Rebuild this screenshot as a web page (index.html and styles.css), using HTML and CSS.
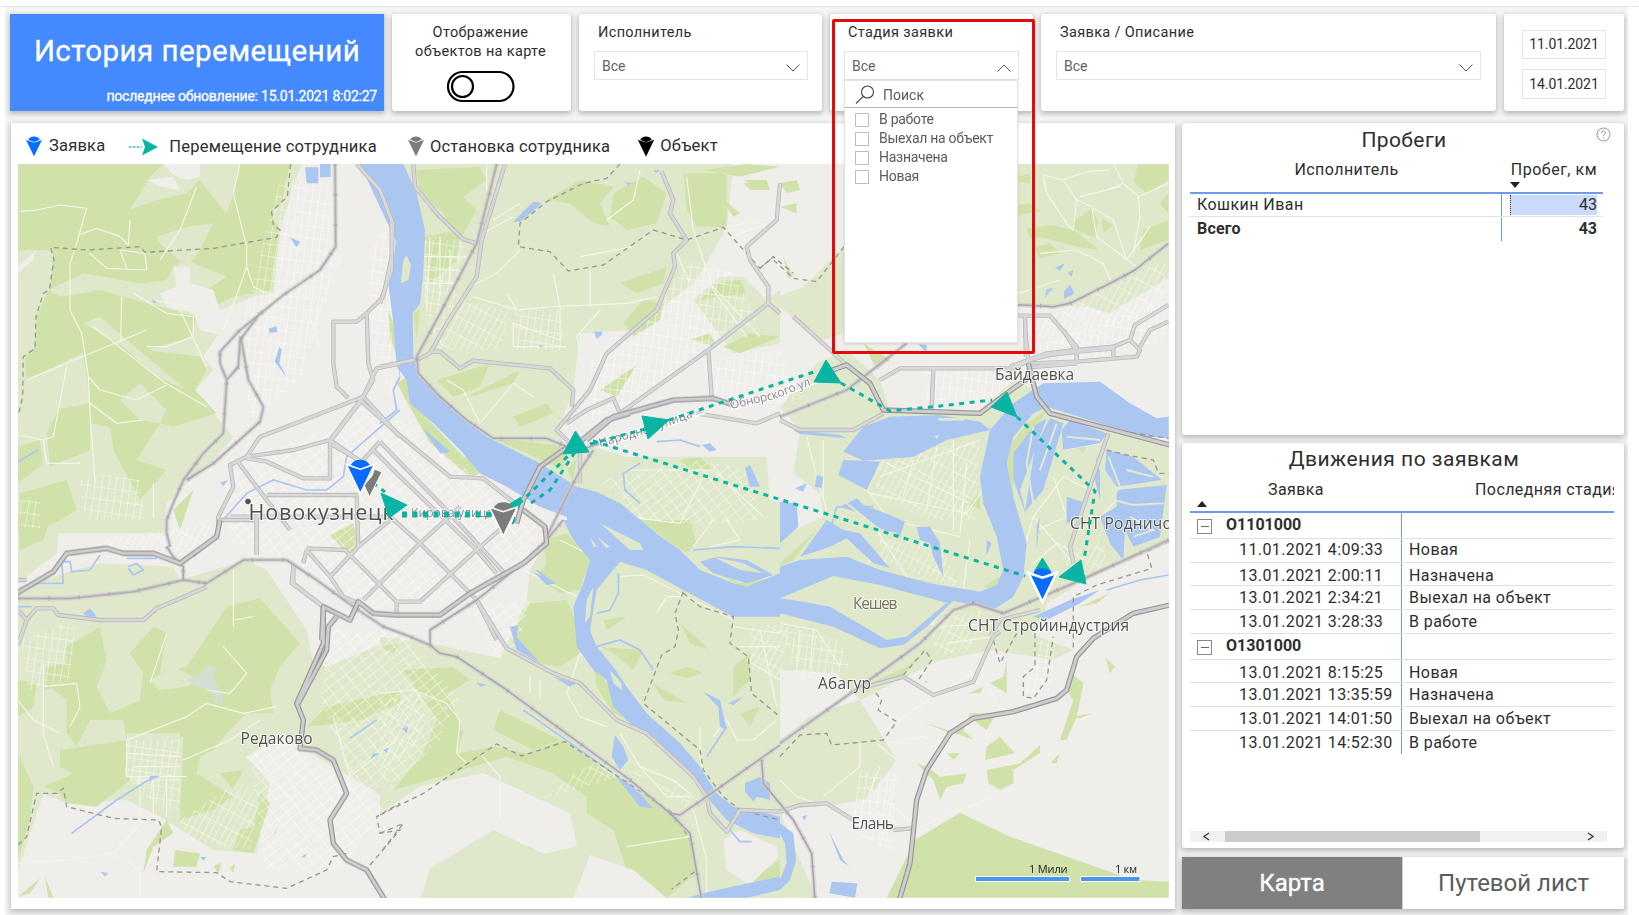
FILE: index.html
```html
<!DOCTYPE html>
<html lang="ru">
<head>
<meta charset="utf-8">
<title>История перемещений</title>
<link rel="stylesheet" href="styles.css">
</head>
<body>
<svg class="defs" width="0" height="0">
  <defs>
    <g id="pin">
      <path d="M-9.5-28.5A10.500 9 0 0 1 9.500-28.500L0-24Z" stroke="none"/>
      <path d="M-14-29 0-24.200 14-29 0 0Z"/>
    </g>
  </defs>
</svg>
<div class="topline"></div>
<div class="canvas">
  <header class="filters">
    <div class="hero">
      <h1>История перемещений</h1>
      <p>последнее обновление: 15.01.2021 8:02:27</p>
    </div>
    <div class="card toggle-card">
      <p>Отображение<br>объектов на карте</p>
      <svg class="toggle" width="70" height="34" viewBox="0 0 70 34"><rect x="2" y="2" width="65.500" height="29" rx="14.500"/><circle cx="16.500" cy="16.500" r="10.500"/></svg>
    </div>
    <div class="card slicer">
      <label>Исполнитель</label>
      <div class="select"><span>Все</span><svg width="14" height="8" viewBox="0 0 14 8"><path d="M.5.5 7 7 13.500.5"/></svg></div>
    </div>
    <div class="card slicer slicer-stage">
      <label>Стадия заявки</label>
      <div class="select"><span>Все</span><svg width="14" height="8" viewBox="0 0 14 8"><path d="M.5 7.500 7 1 13.500 7.500"/></svg></div>
      <div class="dropdown">
        <div class="search"><svg width="20" height="20" viewBox="0 0 20 20"><circle cx="12.500" cy="7" r="6"/><path d="M8.300 11.300 1 18.500"/></svg><span>Поиск</span></div>
        <ul>
          <li><i></i>В работе</li>
          <li><i></i>Выехал на объект</li>
          <li><i></i>Назначена</li>
          <li><i></i>Новая</li>
        </ul>
      </div>
      <div class="callout"></div>
    </div>
    <div class="card slicer slicer-order">
      <label>Заявка / Описание</label>
      <div class="select"><span>Все</span><svg width="14" height="8" viewBox="0 0 14 8"><path d="M.5.5 7 7 13.500.5"/></svg></div>
    </div>
    <div class="card dates"><span>11.01.2021</span><span>14.01.2021</span></div>
  </header>

  <main class="content">
    <section class="panel map-card">
      <div class="legend">
        <span class="lg lg-order"><svg width="18" height="23" viewBox="-14.500 -38 29 38"><use href="#pin" fill="#0a6cff" stroke="#fff" stroke-width="1"/></svg>Заявка</span>
        <span class="lg lg-move"><svg width="30" height="18" viewBox="0 0 30 18"><path d="M1 9H14" stroke="#63d2c8" stroke-width="2" stroke-dasharray="2.500 1.500"/><path d="M14 .5 30 9 14 17.500 17 9Z" fill="#09b4a3"/></svg>Перемещение сотрудника</span>
        <span class="lg lg-stop"><svg width="18" height="23" viewBox="-14.500 -38 29 38"><use href="#pin" fill="#7b7b7b" stroke="#fff" stroke-width="1"/></svg>Остановка сотрудника</span>
        <span class="lg lg-object"><svg width="18" height="23" viewBox="-14.500 -38 29 38"><use href="#pin" fill="#000" stroke="#fff" stroke-width=".5"/></svg>Объект</span>
      </div>
      <svg class="map" width="1151" height="734" viewBox="18 164 1151 734">
        <defs>
          <pattern id="blocks" width="11" height="8" patternUnits="userSpaceOnUse" patternTransform="rotate(-38)"><path d="M0 .5H11M.5 0V8"/></pattern>
          <pattern id="blocks2" width="7" height="12" patternUnits="userSpaceOnUse" patternTransform="rotate(8)"><path d="M0 .5H7M.5 0V12"/></pattern>
          <pattern id="blocks3" width="6" height="16" patternUnits="userSpaceOnUse" patternTransform="rotate(28)"><path d="M0 .5H6M.5 0V16"/></pattern>

          <g id="roads">
            <g transform="translate(0 150) scale(.33333)">
              <path d="M1070 42 1140 120 1175 210V320L1150 440 1100 490 1070 515H1000V640L1010 710 1045 745M1100 490 1105 640 1120 690 1090 740 860 830 780 860 740 920 690 945 700 1010 655 1100V1140M1200 640 1130 655 1090 740 990 870 880 900 740 920M990 870V985H910L800 935 740 925M1090 740 1200 860M710 930 800 1050 870 1140M800 1035H1075M990 880 1075 930"/>
            </g>
            <g transform="translate(230 400) scale(.33333)">
              <path d="M390 0 490 90 660 230 760 235 880 330M450 125 640 320 820 515M430 150 520 240 740 450 800 520M380 290 385 440 300 530M480 350 570 430 660 520 740 600 800 720M385 440 480 360M400 600 570 430 690 320M230 445 345 450 500 605H570L740 450 820 380M500 605V640M230 450 300 530 340 590 385 610M80 350V465M220 490 230 450M300 125 395 0M300 120 400 190M0 350H480M390 190 450 125M190 500 185 550 280 620"/>
            </g>
            <g transform="translate(380 150) scale(.33333)">
              <path d="M100 42 105 110 170 190 250 268 290 280M0 120 38 220 35 360 0 460M375 42 305 270 290 380 200 520 150 610 110 630M0 650 110 628M150 605H180L240 655 280 632 510 655 580 720 575 770M845 65 880 150 870 190 920 270 880 310 885 350 830 480 680 610 630 720 530 840 580 890M1200 100 1190 210 1100 290 1110 330 1165 410V460L1200 490M1165 460 985 600 720 790M985 600 995 740M560 820 620 780 700 745 720 790M600 900V1000"/>
              <path d="M1200 790 1130 820 950 790"/>
            </g>
            <g transform="translate(780 330) scale(.33333)">
              <path d="M40 -40 200 105M0 270 60 300H220L310 250M300 150 360 115H700L750 90 810 75 890 65 1005 55M460 110 455 240M735 0 745 90M745 112 890 100M850 0 890 65V100M985 310 930 470 870 650 880 700M630 920 660 870 780 840"/>
            </g>
            <g transform="translate(0 520) scale(.33333)">
              <path d="M54 270 80 300 54 375M80 300 110 265H160L175 285 300 300H430L470 265 530 240 620 200M54 180H80M650 0H770V100M880 130V190L970 260"/>
            </g>
            <g transform="translate(380 520) scale(.33333)">
              <path d="M290 240 380 385 520 460 600 490 710 600 800 640 940 770 980 830 990 880 1040 935 1080 870 1200 875"/>
            </g>
            <g transform="translate(780 600) scale(.33333)">
              <path d="M260 260 370 230 460 285 580 245 640 110 660 95M0 635 60 615 140 610 220 660M340 690 395 685"/>
            </g>
            <g transform="translate(1010 150) scale(.33333)">
              <path d="M-120 497H120L200 590V635M310 590V620M0 650 110 610 200 600 310 590 360 570 390 600 380 620 200 635 60 640M360 570 375 525 475 465M390 590 420 540 475 515M45 500 48 620"/>
            </g>
          </g>
          <g id="highways">
            <g transform="translate(230 400) scale(.33333)"><path d="M880 330 945 380 950 430 880 490 720 580 630 645H500L430 640 385 605 360 660 280 620 275 720M860 370 880 300 930 200 1000 150 1050 125 1130 60 1200 40"/></g>
            <g transform="translate(380 150) scale(.33333)"><path d="M620 870 700 800 880 750 1000 745 1060 765"/></g>
            <g transform="translate(780 330) scale(.33333)"><path d="M130 130 200 105 270 160 310 240 600 250 680 190 750 140M745 100 770 200 810 250 1000 300 1170 345"/></g>
            <g transform="translate(0 520) scale(.33333)"><path d="M50 220 160 155 200 100 320 85 370 100H460L540 130 650 50 660 0M970 260V370L890 550 910 600 900 685 950 690 1000 720 1040 820 990 900 1000 970 1040 1020 1100 1050 1155 1140M1010 290 985 320 980 390 895 550"/></g>
            <g transform="translate(780 600) scale(.33333)"><path d="M1170 15 1060 40 940 115 890 170 860 270 830 295 700 335 580 355 510 400 440 510 410 600 390 790 358 900"/></g>
          </g>
          <g id="rails">
            <g transform="translate(0 150) scale(.33333)"><path d="M1005 42 1007 290 960 360 850 435 720 540 660 605V640L680 690 670 850 610 910 550 990 515 1070 500 1110V1150L510 1190M780 490 720 570 715 650 680 690M722 560 745 690 790 770 780 815 640 940 560 990"/></g>
            <g transform="translate(380 150) scale(.33333)"><path d="M350 42 290 280 180 490 110 620 115 670 180 740 260 810 340 865H500L560 890M600 900 660 880M500 1160 600 960 640 900"/></g>
            <g transform="translate(780 330) scale(.33333)"><path d="M0 260 200 180 380 40M1166 630 880 760 670 850 580 820 520 840 420 940 310 1020 0 1240"/></g>
            <g transform="translate(0 520) scale(.33333)"><path d="M54 235H210L400 215 550 180 620 190 730 120 860 120 950 180 1060 260 1150 320 1230 350 1290 375M500 80 520 110 550 140V180L620 190"/></g>
            <g transform="translate(380 520) scale(.33333)"><path d="M150 375 180 400 230 410 380 510 750 780 870 880 930 940 965 1140M870 880 900 885 980 830 1200 675M150 375V330L290 240 440 120 500 60 550 0M1145 720 1150 790 1240 900 1295 1000 1305 1140"/></g>
            <g transform="translate(1010 150) scale(.33333)"><path d="M0 463 130 470 180 460 300 400 375 360 475 280"/></g>
          </g>
        </defs>
        <rect class="land" x="18" y="164" width="1151" height="734"/>

        <g class="park">
          <g transform="translate(0 150) scale(.33333)"><path d="M54 42H905L880 110 840 240 820 430 770 470 650 560 610 620 640 660 585 720 650 800 700 860 640 930 560 1000 500 1060 490 1150H54Z"/></g>
          <g transform="translate(0 520) scale(.33333)"><path d="M54 0H180L170 100 54 190ZM54 200 300 130 520 140 540 180 740 120 800 150 920 330 940 430 980 440 1200 350V830L1160 835 1050 770 900 680 850 640 740 710 810 790 770 1000 640 990 480 890 380 840 200 850 130 820 54 1050Z"/></g>
          <g transform="translate(380 150) scale(.33333)"><path d="M60 42H1060L1040 230 980 340 940 400 760 540 600 550 580 720 530 850 570 900 640 890 740 920H1160L1170 1050 1200 1060V1150H760L400 950 80 680 90 480ZM940 450 1020 380 1090 380 1160 450 1200 420V580L1060 610Z"/></g>
          <g transform="translate(570 0) scale(.33333)"><path d="M600 900 700 860 822 740V1000L760 1020ZM1340 490H1800V830L1620 940 1550 920 1340 910Z"/></g>
          <g transform="translate(780 330) scale(.33333)"><path d="M0 230 110 100 200 60 300 150 330 240H600L700 150 1000 290 1166 350V640L900 760 800 820 780 900 640 960H0V620L130 560 120 490 40 430 60 300Z"/></g>
          <g transform="translate(380 520) scale(.33333)"><path d="M500 60 560 0H1200V1140H560L630 1000 760 1050 860 1133 900 1140 500 1140H120L150 1045 340 930 490 1000 590 980 570 880 310 760 120 800 0 880V350L150 370 360 415 400 330 440 240 450 150Z"/></g>
          <g transform="translate(780 600) scale(.33333)"><path d="M0 0H790L720 90 880 150 820 180 640 150 480 180 400 220 240 300 350 480 260 600 110 620 0 650ZM0 640 120 893H0Z"/></g>
        </g>

        <g class="wood">
          <g transform="translate(0 150) scale(.33333)">
            <path d="M54 42H490L450 80 390 180 470 150 560 130 600 90 680 190 720 42H870L850 150 815 190 840 240 815 420 700 440 640 470 620 420 680 380 560 330 520 350 500 390 420 400 250 370 145 420 180 440 300 420 480 470 590 500 570 560 440 600 600 620 620 660 585 720 650 790 520 830 480 820 500 780 420 700 360 750 420 810 480 820 410 930 500 960 420 1050 340 900 330 830 270 820V900L150 950 140 850 180 770 260 760 250 610 80 690 75 620 105 590 110 500 145 420 160 300 54 340Z"/>
            <path d="M54 890 120 870 130 940 54 1000ZM60 1030 200 990 230 1080 180 1110 120 1140 54 1140ZM210 740 240 725 235 745ZM520 1080 580 1020 540 1140ZM1075 42H1110L1190 150 1200 250 1170 180 1120 110ZM1165 480 1195 560 1198 640 1170 560Z"/>
          </g>
          <g transform="translate(0 520) scale(.33333)">
            <path d="M54 0H150L130 60 60 90ZM200 380 300 320 320 420 290 500 330 580 420 540 430 460 390 400 460 320 500 340 480 460 560 440 680 260 780 235 900 370 840 440 810 510 820 580 740 580 680 640 640 690 600 710 590 760 700 830 640 870 540 900 550 650 380 700 390 780 290 860 200 850 180 820 130 800 220 760 180 740 180 690 380 660 370 600 270 600 230 680 200 640 200 540 150 500 130 490 200 430Z"/>
            <path d="M54 480 110 490 100 560 54 590ZM54 700 100 800 90 900 54 1020ZM140 440 190 430 190 500 130 510ZM990 45 1060 10 1080 80 1040 100ZM920 620 980 560 1200 510V550L1080 600ZM780 820 810 850 760 1000 700 990 720 930 760 920ZM660 760 730 750 700 810ZM525 990 600 1000 590 1040 520 1040ZM640 1040 665 1025 655 1060ZM690 1045 705 1030 700 1060ZM54 1130 120 1075 90 1120ZM135 1070 160 1133H145ZM820 940 835 920 825 945ZM430 1060 440 990 500 900 520 940 460 980Z"/>
          </g>
          <g transform="translate(380 150) scale(.33333)">
            <path d="M110 60 300 50 320 90 250 140 290 180 240 270 190 190 120 130ZM500 150 600 90 700 110 660 160 690 230 640 220 570 160ZM700 130 790 80 860 130 830 220 740 240 690 200ZM910 70H1040V230H950L920 180ZM1090 90 1160 90 1150 120ZM970 60 1080 80 1200 50 1100 42ZM1010 130 1080 190 1060 200ZM960 450 1010 400 1080 390 1100 430 1020 440ZM730 520 790 450 850 460 840 510 760 560ZM930 570 990 550 1010 590ZM660 720 770 645 710 740ZM170 690 330 640 300 710 220 740ZM240 750 420 660 400 700ZM400 800 500 760 520 790 420 830ZM320 860 560 890 550 960 420 900ZM50 700 80 680 100 760 250 920 330 960 270 980 150 880ZM130 260 240 240 230 330 150 400ZM100 490 120 480 110 570ZM720 400 860 350 850 400 770 430ZM1030 590 1110 550 1200 560 1080 610ZM900 930 960 920 1000 960 930 960ZM560 960 590 930 580 990Z"/>
          </g>
          <g transform="translate(570 0) scale(.33333)"><path d="M520 550 590 540 600 570 540 570ZM630 550 680 540 690 570 650 580ZM630 620 680 610 680 640ZM640 770 670 830 655 835Z"/></g>
          <g transform="translate(1010 150) scale(.33333)"><path d="M385 42H475V90L410 130 370 95ZM450 160 475 130V190ZM190 215 245 175 265 215 255 265 190 235ZM275 205 310 225 280 250ZM50 235 130 225 200 245 265 300 200 290 90 260 60 265ZM390 300 400 240 475 210V270ZM25 80 60 70 60 100 25 95ZM25 165 60 160 90 185 25 195ZM70 290 120 280 150 310 90 325Z"/></g>
          <g transform="translate(780 330) scale(.33333)"><path d="M560 520 600 490 600 540ZM610 770 660 740 640 780ZM680 360 740 280 800 240 760 320 700 400 700 520 670 440ZM890 350 920 345 910 370ZM900 830 990 790 950 820ZM250 40 330 90 290 120ZM0 700 110 600 40 690 0 710Z"/></g>
          <g transform="translate(380 520) scale(.33333)">
            <path d="M780 0H930L950 70 920 100 860 60ZM490 60 560 40 630 120 600 210 540 220 470 170 500 130ZM410 320 450 250 560 240 590 310 600 400 540 440 480 430 400 370ZM640 430 700 520 740 600 700 580 650 500ZM0 380 60 370 40 400ZM70 450 220 440 270 480 170 540 200 520 250 640 230 700 340 680 440 700 550 660 700 770 880 880 930 950 950 1060 860 1133 740 1050 700 930 620 880 620 830 520 760 380 710 180 770 40 810 130 700 170 600ZM360 570 540 660 460 690 340 630ZM670 300 740 290 680 330ZM900 310 990 390 930 370ZM660 380 790 390 760 450 700 400ZM870 460 920 440 970 460 920 475ZM820 490 920 550 850 540ZM960 130 1080 190 1200 170 1100 210ZM1060 440 1110 400 1110 480 1060 530ZM1080 580 1140 560 1110 620ZM280 880 300 860 285 885ZM360 890 380 870 380 880ZM460 910 480 890 485 910ZM1080 1100 1200 1020V1080Z"/>
          </g>
          <g transform="translate(780 600) scale(.33333)">
            <path d="M320 893 405 720 540 638 690 710 1060 840 1166 845V893ZM380 200 440 150 350 240 270 250ZM530 210 560 200 570 240 480 255 430 245ZM615 480 620 440 660 410 705 460ZM620 510 720 490 780 435 780 460 700 510 700 550 660 570 625 550ZM410 490 440 500 480 530 560 520 550 550 500 560 480 600 460 540ZM385 385 420 375ZM430 365 500 390 580 420 550 390 570 340 650 340 620 390 580 360 510 400ZM630 250 670 230 680 180 680 280ZM565 280 610 260 600 280ZM840 420 880 300 860 270 880 225 910 250 890 350 860 420ZM880 350 935 340 900 355ZM975 170 1005 200 990 220ZM810 490 840 460 830 490ZM100 300 125 310 115 315ZM500 460 540 460 520 480Z"/>
          </g>
        </g>
        <g class="park">
          <g transform="translate(0 150) scale(.33333)"><path d="M54 300H160L150 420 54 450ZM470 260 560 230 640 220 600 300 560 350 480 280ZM600 42H720L700 130 680 190 600 90ZM75 690 250 610 270 760 160 780 140 850 54 860ZM250 520 300 500 380 570 560 720 470 680 370 590Z"/></g>
          <g transform="translate(0 520) scale(.33333)"><path d="M450 480 520 440 600 480 560 500 480 510ZM380 640 540 640 550 720 380 770Z"/></g>
        </g>
        <g class="land">
          <g transform="translate(0 150) scale(.33333)"><path d="M520 350H570V400L640 420 660 480 760 440 820 430 770 480 680 560 600 540 580 490 500 470 480 430 530 410ZM490 42H600V80L560 90 520 75ZM54 350 110 300 100 330 54 370ZM440 90 520 80 540 120 480 110Z"/></g>
          <g transform="translate(380 520) scale(.33333)"><path d="M120 800 310 760 570 880 590 980 490 1000 340 930 150 1045 120 1133H0V880ZM630 1005 760 1050 860 1133H580ZM1030 960 1080 930 1190 980 1195 1010 1110 1095 1040 1050Z"/></g>
          <g transform="translate(780 600) scale(.33333)"><path d="M0 210 170 220 240 300 170 320 90 350 0 420ZM420 230 520 190 580 200 560 260 480 270ZM0 630 100 620 200 840 110 893 50 760Z"/></g>
        </g>
        <path class="tailings" d="M186 679 200 675 208 665 216 668 214 680 222 694 223 704 216 703 210 690 195 686Z"/>

        <g class="streets">
          <g>
            <path fill="url(#blocks)" d="M265 450 330 430 360 400 400 420 480 480 540 530 520 570 470 600 350 610 290 560 230 540 225 480ZM330 630 400 630 460 700 420 760 360 800 320 700ZM250 755 280 740 345 780 385 810 340 870 265 870ZM600 480 700 460 750 470 760 520 700 525 640 520ZM470 610 530 600 520 640 500 660ZM390 690 450 700 440 740 390 790Z"/>
            <path fill="url(#blocks2)" d="M425 240 465 240 460 290 440 350 425 320ZM370 250 390 220 393 400 372 350ZM515 310 562 310 562 350 515 350ZM690 260 730 270 760 320 700 350 640 400 590 420 590 360 640 330ZM925 370 1000 365 1050 340 1165 300 1165 340 1040 370 1000 400 925 400ZM780 630 840 640 850 670 800 680ZM860 770 900 775 890 850 850 830ZM20 640 75 620 70 680 30 690ZM125 740 180 740 180 810 160 810 125 775ZM1040 640 1055 640 1052 690 1025 695ZM20 500 40 500 40 528 20 528ZM80 480 100 475 140 480 145 520 85 520ZM280 180 330 180 340 260 300 380 250 420 240 330ZM700 360 780 350 800 400 720 410Z"/>
            <path fill="url(#blocks3)" d="M870 460 980 440 975 520 930 520 880 500ZM450 300 510 310 500 350 440 350ZM180 820 240 780 260 800 250 850 190 840ZM1020 330 1165 260 1165 300 1080 350ZM750 625 790 625 780 680 750 670ZM380 700 430 690 420 740 380 780ZM930 620 985 610 970 650 935 655ZM1060 560 1100 540 1110 570 1080 575ZM100 540 230 520 190 550 120 560ZM880 540 940 540 960 590 880 560ZM540 800 580 770 600 760 700 800 690 812 640 770Z"/>
          </g>
          <g class="lanes">
            <g transform="translate(0 150) scale(.33333)"><path d="M60 185 110 180 180 165 260 175 230 280 210 340V480L245 550 265 680 270 790 285 1000M235 255 290 235 360 260 385 285 390 210M720 42 700 130 740 290 740 350 760 410 800 430M740 350 705 450 670 540M270 310 320 355 440 360 435 310 360 300 380 355M365 440 362 570M440 540 80 690M280 530 490 695 620 770M460 450 570 470M590 110 540 240 480 330M200 650 160 860 130 870 54 855M130 870 140 940 240 940M265 680 300 720 410 750 500 705M270 760 350 820 430 810M400 430 500 490 580 500V560L500 590 440 590M540 480 620 650M1010 350 980 410 940 540M880 180 920 190M930 500 960 600M460 1000V1100"/></g>
            <g transform="translate(0 520) scale(.33333)"><path d="M54 540 100 600 180 640M130 430V640L160 740M130 500 230 490 240 560 210 620M380 660 560 590 620 550 730 580 830 560M380 660V770H560M380 700 540 710M400 740H540M400 780H540M670 380 740 460 690 520 620 510M700 150V320M700 300 760 290M500 340 450 490M550 720 690 660 780 600M54 1030 200 1020 340 1000M340 1000 440 890M340 1000 420 1050V1133M1000 590 1050 770 1190 660M740 710 880 840 960 970M1050 770V830M420 770V890M460 780V890M500 780V890"/></g>
            <g transform="translate(380 150) scale(.33333)"><path d="M320 42 320 120M400 200 290 260M420 160 340 210M270 410 350 370 420 300M380 430 410 480 280 440M410 480 520 470 740 460 830 440M520 370 540 470V570L400 520M630 360V470M660 480 590 560 600 600M150 260 140 480M180 260V440M210 300V400M130 320H260M130 360H240M130 400H220M400 520V590H560M200 690 250 720 300 820 400 700 460 740M920 80 940 240 960 300 1000 420 1100 560M930 400 890 310M780 60 760 150 680 210M600 320 760 290M990 400 1140 560M1170 220 1050 260M1040 230 1200 200M740 960 1000 960 1150 1100M740 1100 900 1120 980 960"/></g>
            <g transform="translate(780 330) scale(.33333)"><path d="M80 320 110 440 140 540M130 330V500M190 440 260 480 330 570 540 620M270 490 560 550 650 420M320 400 570 520M300 440 600 330M370 500 400 390M440 540 470 350M520 330V600M560 400 540 610M570 630 550 780M290 600 400 770M240 610 270 700M760 560 880 700M700 780 760 560 850 440 930 480M820 440 860 560 770 600M850 360 960 340M980 380 1020 500 960 560M760 700 830 640 870 660"/></g>
            <g transform="translate(380 520) scale(.33333)"><path d="M540 60 640 110M430 150 590 230M0 520 100 510 200 550 240 600 230 700 260 730M640 430 600 400 560 520 600 590 680 620M450 470V520M480 480V540M720 170 790 165 900 220 1060 300M830 280 860 230 900 230M300 700 360 770V900M720 640 780 740 860 830 930 830M780 740 880 780 940 830M940 80 1000 0M990 80 1080 60 1040 0M1000 650 1040 600 1070 660 1120 660 1190 600M960 620 960 720 980 780M1140 330 1190 560M1100 420 1200 480M1080 380H1200M1060 320 1200 340M940 870 980 1020V1133M740 980 930 950"/></g>
            <g transform="translate(780 600) scale(.33333)"><path d="M320 430 430 410 510 440M300 400 430 310 590 210M240 430 240 500 130 590M420 680 520 640 640 590M290 430 350 480M600 210 660 330M260 560 390 660M270 620 380 690M230 700 370 760M300 500 260 600M340 520 300 740M0 70 110 90 180 200M60 90 50 200M100 90 90 210M480 80 640 70M500 130 640 110M0 540 50 590 110 610"/></g>
            <g transform="translate(1010 150) scale(.33333)"><path d="M100 80 110 130 170 220 190 240M100 75 160 90 200 150 190 240M160 90 230 65 300 60M200 150 245 170 260 260 380 350M310 42 340 100 385 140 475 100M340 100 290 120M385 140 390 200 370 310M250 175 310 210 350 330M90 310 200 300 280 340 300 390M25 430 150 390M420 230 350 330M210 140 330 110"/></g>
          </g>
        </g>

        <g class="water">
          <g transform="translate(0 150) scale(.33333)"><path d="M915 52H955V100H920ZM960 42H992V82H960ZM870 262 900 275 890 292ZM805 535 830 530 832 545 810 550ZM838 590 824 635 860 682 838 640 845 600ZM455 447 470 455 460 460ZM660 998 685 990 670 1008ZM1080 42H1200V700L1190 560 1170 400 1200 300Z" /></g>
          <g transform="translate(380 150) scale(.33333)">
            <path d="M-50 42H70L110 130 135 240 130 370 120 460 98 490 100 620 120 680 180 740 250 800 320 860 400 900 480 940 590 1010 650 1025 720 1060 830 1150H570L560 1100 480 1070 430 1040 380 1010 300 970 240 900 160 820 90 760 80 690 50 650 40 520 25 400 45 300 55 200 30 120 0 80Z"/>
            <path d="M400 215 460 155 485 158 470 175 420 215ZM735 97 755 98 745 107ZM820 60 840 60 830 70ZM642 545 667 545 665 555 650 567ZM475 585 495 588 480 592ZM1095 955 1110 945 1140 1010 1110 1010ZM965 885 990 880 1010 900 990 905ZM130 835 210 905 180 910Z"/>
          </g>
          <g transform="translate(780 330) scale(.33333)">
            <path d="M0 710 60 690 200 680 300 720 450 760 600 785 650 765 670 720 650 620 610 520 600 440 630 300 700 220 790 160 960 155 1050 220 1130 265 1166 260V325L1100 320 960 280 800 230 760 250 700 320 680 400 700 500 740 640 730 740 700 800 640 840 520 812 440 890 370 945 300 955 160 890 0 850Z"/>
            <path d="M190 365 250 290 330 260 480 255 600 275 630 300 500 330 400 380 250 392ZM190 390 300 395 260 480 175 435ZM0 515 50 520 55 590 0 640ZM60 680 140 570 190 600 240 610 330 715 280 700 200 625 150 650ZM180 530 230 505 250 525 330 555 375 575 360 620 290 590 240 550ZM410 590 450 590 480 640 490 740 460 680 450 640 420 630ZM45 475 80 460 70 485ZM110 435 130 440 125 475 105 470ZM700 370 760 290 800 265 720 480 740 560 700 450ZM810 265 850 280 790 480 735 545 765 350ZM870 270 980 310 960 340 850 360 845 300ZM980 360 1060 380 1145 450 1010 470 975 420ZM1010 480 1160 465 1140 620 1060 650 1035 600 1030 690 990 640 960 560 1010 530ZM860 500 920 520 905 560 860 580ZM770 590 780 560 770 660ZM950 380 960 430 960 510 945 450ZM620 630 635 640 620 675ZM570 635 600 625ZM760 860 870 810 960 780 900 820 800 870ZM415 42 440 45 440 70ZM40 300 180 315 200 325 60 312Z"/>
          </g>
          <g transform="translate(380 520) scale(.33333)">
            <path d="M550 0 580 60 630 120 610 190 580 260 590 380 640 450 680 480 700 560 760 620 860 690 930 760 980 830 1040 900 1120 940 1200 955V890L1120 870 1060 860 1010 820 960 740 900 670 800 580 740 500 700 440 650 380 630 330 650 210 720 125 800 150 910 210 1060 290H1200V160L1100 200 1060 190 960 150 900 90 770 0Z"/>
            <path d="M390 320 415 315 410 350 480 430 410 390ZM705 645 730 680 745 720 720 750 695 710ZM700 760 760 800 820 865 780 860ZM960 125 1010 110 1100 120 1180 165 1100 190 1000 160ZM1095 790 1140 770 1170 790V840L1130 830 1120 845 1095 815ZM285 410 330 445ZM290 487 320 495 300 500ZM65 625 85 620 80 640ZM10 690 25 683 20 698ZM460 155 530 190 500 195ZM520 470 590 490 570 500ZM970 515 1020 540 1040 630 1020 620 1015 560ZM1045 550 1090 530 1060 555ZM740 630 770 645ZM850 510 930 505ZM920 1133 1010 1110 1200 1070V1110L1100 1133Z"/>
          </g>
          <g transform="translate(0 520) scale(.33333)"><path d="M250 280 270 265 290 290 260 290ZM445 785 450 768 480 768ZM600 1010 620 1012 610 1022ZM302 1055 325 1060 315 1070ZM905 1010 920 1000 915 1013ZM1110 720 1120 700 1140 700ZM1150 690 1165 685 1160 695Z"/></g>
          <g transform="translate(780 600) scale(.33333)"><path d="M155 845 232 850 225 893 148 880ZM145 690 190 780 208 800 180 780ZM65 650 80 645 75 660ZM0 670 40 700 48 780 30 840 0 870V840L20 790 15 730 0 700Z"/></g>
          <g transform="translate(1010 150) scale(.33333)"><path d="M162 425 180 403 193 430 162 447ZM135 353 165 340 150 362ZM173 370 190 360 185 380ZM105 445 110 418 130 413 115 430Z"/></g>
          <g class="streams">
            <g transform="translate(0 150) scale(.33333)"><path d="M1200 780 1040 920 1030 980 980 1020H920L820 990 740 1030 660 1120 640 1170M54 935 115 900"/></g>
            <g transform="translate(0 520) scale(.33333)"><path d="M54 260H95M90 190H190L185 125H210L215 155 270 150 300 105M380 115H470M385 140 410 130 430 150 400 165 385 145M215 940 350 840 445 780M1050 655 1130 600M580 110 640 60"/></g>
            <g transform="translate(380 150) scale(.33333)"><path d="M60 680 40 720 50 780 0 820M140 850 200 910M830 875 900 870 960 890M780 940 730 970 735 1020 780 1060"/></g>
            <g transform="translate(380 520) scale(.33333)"><path d="M715 160V220L690 270 650 280M650 380 720 360 780 390 820 450M430 570 700 760M1050 930 1080 965H1115M940 90 1060 80 1200 85M1040 620 980 710M470 150 520 190"/></g>
            <g transform="translate(780 330) scale(.33333)"><path d="M1166 735 1080 750 980 780M150 600 170 530 280 530M330 560 360 590"/></g>
          </g>
        </g>
        <g class="park">
          <g transform="translate(380 150) scale(.33333)"><path d="M70 330 80 315 93 345 85 390 62 400Z"/></g>
          <g transform="translate(780 330) scale(.33333)"><path d="M0 805 160 738 300 765 500 818 380 920 320 930 150 830 70 815ZM475 265 560 262 550 272 475 272ZM460 318 480 315 470 325Z"/></g>
          <g transform="translate(380 520) scale(.33333)"><path d="M630 50 650 80 640 80ZM650 50 690 80 680 85ZM660 10 780 70 790 90 750 90ZM640 200 630 290 615 310 620 240ZM690 450 725 490 725 510 700 490ZM1000 110 1090 130 1150 160 1080 150Z"/></g>
        </g>
        <g class="dykes">
          <g transform="translate(780 330) scale(.33333)"><path d="M150 560 260 600 350 610M200 520 300 600M1000 510 1060 525 1150 520M1040 420 1120 440M1050 560 1120 600 1060 620M985 380 1020 470 960 560M860 320 960 330M760 290 740 400 760 520M830 280 780 420"/></g>
        </g>

        <g class="bounds">
          <g transform="translate(0 150) scale(.33333)"><path d="M872 42 862 140 815 185 820 225 840 240 830 262 640 295 435 307 420 290 260 300 152 292 162 330 148 420 130 430 108 500 105 595 70 620 68 740 54 800"/></g>
          <g transform="translate(380 150) scale(.33333)"><path d="M720 42 680 85 610 100 500 155 420 220 415 290 510 305 565 363 670 345 820 240 920 270 1030 232 1140 355 1180 320 1240 370"/></g>
          <g transform="translate(570 0) scale(.33333)"><path d="M570 805 605 775 670 835 740 845 822 740"/></g>
          <g transform="translate(0 520) scale(.33333)"><path d="M54 975 80 950 110 820H170L190 805 200 860 340 895 475 900 485 920 470 1055 650 1058 690 1085 860 1105 980 1050 1000 1010 1040 1000M1110 1035 1200 930 1140 940 1130 890 1200 850"/></g>
          <g transform="translate(380 520) scale(.33333)"><path d="M0 885 130 820 350 672 425 708 555 665 700 760 880 880 930 960 950 1050 875 1108M910 215 885 280 895 330 885 380 845 405 790 550 960 690 970 750 1030 830 1080 870 1200 900M910 220 960 260 1060 290 1050 370 1105 410 1115 520 1200 590M0 940 70 910 0 1000"/></g>
          <g transform="translate(780 330) scale(.33333)"><path d="M980 360 1040 375 1120 390 1135 430H1166M1166 635 1100 665 1115 715 950 765 880 800 880 960M1000 300 1166 325"/></g>
          <g transform="translate(780 600) scale(.33333)"><path d="M0 470 60 405 140 400 155 435 310 420 350 365 295 330 305 300 280 270M370 225 435 150 455 180 415 240M640 120 660 190 710 100M765 100V200L730 230V290L760 295 800 240 820 110"/></g>
        </g>

        <use href="#roads" class="road-case"/><use href="#roads" class="road-core"/>
        <use href="#rails" class="rail-case"/><use href="#rails" class="rail-core"/><use href="#rails" class="rail-tick"/>
        <use href="#highways" class="hw-case"/><use href="#highways" class="hw-core"/>

        <g class="street-names">
          <path id="street-a" fill="none" d="M600 447 645 434 705 413"/>
          <path id="street-b" fill="none" d="M731 409 775 399 818 382"/>
          <text x="411" y="517" textLength="82">Кирова улица</text>
          <text><textPath href="#street-a" textLength="98">Народная улица</textPath></text>
          <text><textPath href="#street-b" textLength="84">Обнорского ул</textPath></text>
        </g>
        <g class="places">
          <circle cx="248" cy="501.500" r="2.800"/>
          <text class="city" x="248.500" y="520" textLength="145">Новокузнецк</text>
          <text x="240.500" y="744" textLength="72">Редаково</text>
          <text x="995" y="380" textLength="79">Байдаевка</text>
          <text x="1070" y="529" textLength="110">СНТ Родничок</text>
          <text class="isle" x="853" y="609" textLength="44.500">Кешев</text>
          <text x="968" y="631" textLength="161">СНТ Стройиндустрия</text>
          <text x="818" y="689" textLength="53">Абагур</text>
          <text x="851.500" y="828.500" textLength="42.500">Елань</text>
        </g>

        <path class="track" d="M373 483 385 492M402 513H500M402 516H500M519 504 572 452M531 503 550 490 575 452M590 444 645 429M669 420 780 383 817 371M841 383 890 411 940 406 992 400M1017 417 1095 491 1084 560M593 441 1025 576"/>
        <g class="arrows"><path d="M381 493 407 505 389 518ZM575.500 431 589 452 563 454ZM642 416 669 420 648 439ZM826 360 841 383 814 382ZM1007 392 1017 417 991 407ZM1059 577 1081 560 1086 584ZM505 507 521 497 519 508ZM1042.500 558 1034 572H1051ZM512 524 515 517 514 523Z"/></g>
        <path class="stop-side" d="M374.500 469 382 472 369.500 497 364 485 372 476Z"/>
        <g class="pins">
          <use href="#pin" x="360.300" y="493.500" fill="#0a6cff"/>
          <use href="#pin" x="503.300" y="536" fill="#7b7b7b"/>
          <use href="#pin" x="1042.500" y="602" fill="#0a6cff" stroke-width="2.500"/>
        </g>
        <g class="scale">
          <rect x="975.500" y="876.500" width="94" height="5"/><rect x="1080.500" y="876.500" width="59.500" height="5"/>
          <text x="1029" y="873" textLength="38.500">1 Мили</text><text x="1115" y="873" textLength="22">1 км</text>
        </g>
      </svg>
    </section>

    <aside class="side">
      <section class="card runs">
        <div class="runs-head"><h2>Пробеги</h2><svg class="help" width="15" height="15" viewBox="0 0 15 15"><circle cx="7.500" cy="7.500" r="6.500"/><path d="M5.500 6C5.500 3.300 9.500 3.300 9.500 6 9.500 7.300 7.500 7.400 7.500 9.200M7.500 10.400V11.500"/></svg></div>
        <div class="runs-row runs-cols"><span>Исполнитель</span><span>Пробег, км<i class="sort-down"></i></span></div>
        <div class="runs-row person"><span>Кошкин Иван</span><span><b class="picked">43</b></span></div>
        <div class="runs-row total"><span>Всего</span><span>43</span></div>
      </section>

      <section class="card moves">
        <h2>Движения по заявкам</h2>
        <div class="moves-row moves-cols"><span>Заявка<i class="sort-up"></i></span><span>Последняя стадия</span></div>
        <div class="moves-row group"><span><i class="expander"></i>O1101000</span><span></span></div>
        <div class="moves-row h24 high"><span>11.01.2021 4:09:33</span><span>Новая</span></div>
        <div class="moves-row h22 low"><span>13.01.2021 2:00:11</span><span>Назначена</span></div>
        <div class="moves-row h24"><span>13.01.2021 2:34:21</span><span>Выехал на объект</span></div>
        <div class="moves-row h24"><span>13.01.2021 3:28:33</span><span>В работе</span></div>
        <div class="moves-row group"><span><i class="expander"></i>O1301000</span><span></span></div>
        <div class="moves-row h22 low"><span>13.01.2021 8:15:25</span><span>Новая</span></div>
        <div class="moves-row h24"><span>13.01.2021 13:35:59</span><span>Назначена</span></div>
        <div class="moves-row h24"><span>13.01.2021 14:01:50</span><span>Выехал на объект</span></div>
        <div class="moves-row h22 last"><span>13.01.2021 14:52:30</span><span>В работе</span></div>
        <div class="scrollbar"><svg width="7" height="9" viewBox="0 0 7 9"><path d="M6 1 1 4.500 6 8"/></svg><div class="thumb"></div><svg width="7" height="9" viewBox="0 0 7 9"><path d="M1 1 6 4.500 1 8"/></svg></div>
      </section>

      <nav class="tabs"><span class="active">Карта</span><span>Путевой лист</span></nav>
    </aside>
  </main>
</div>
</body>
</html>
```
FILE: styles.css
```css
* { box-sizing: border-box; }
body { margin: 0; width: 1639px; height: 915px; overflow: hidden; background: #fff; font-family: Roboto, "Liberation Sans", sans-serif; color: #2e2e2e; }
h1, h2, p, ul { margin: 0; padding: 0; font-weight: 400; }
.defs { position: absolute; }
.topline { height: 7px; border-bottom: 1px solid #e1e6e5; }
.canvas { margin: 0 11px 0 5px; height: 908px; padding: 7px 4px 0 5px; background: #f5f5f5; }
.card, .panel, .hero, .tabs { box-shadow: 0 2px 5px 1px rgba(90, 80, 80, .36); }
.card, .panel { background: #fff; }
.card { border-radius: 3px; }

.filters { display: grid; grid-template-columns: 374px 179px 243px 203px 455px 120px; column-gap: 8px; height: 97px; }
.hero { background: #4589ff; color: #fff; text-align: center; padding-top: 17px; }
.hero h1 { font-size: 29.500px; line-height: 40px; letter-spacing: .45px; -webkit-text-stroke: .3px #fff; }
.hero p { margin-top: 15px; padding-right: 7px; text-align: right; font-size: 14px; line-height: 20px; letter-spacing: -.22px; -webkit-text-stroke: .3px #fff; }
.toggle-card { text-align: center; padding: 9px 2px 0 0; }
.toggle-card p { font-size: 14.500px; line-height: 19px; letter-spacing: .35px; }
.toggle { display: block; margin: 9px 0 0 54px; fill: none; stroke: #000; stroke-width: 2.200; }
.slicer { padding: 8px 14px 0 15px; }
.slicer-order { padding-right: 15px; }
.slicer label { display: block; padding-left: 4px; font-size: 14.500px; line-height: 22px; height: 29px; letter-spacing: .35px; }
.select { display: flex; justify-content: space-between; align-items: center; height: 29px; border: 1px solid #e4e4e4; padding: 0 7px 0 7px; font-size: 14px; color: #636363; background: #fff; }
.select svg { margin-top: 4px; fill: none; stroke: #555; stroke-width: 1; }
.slicer-stage { position: relative; padding: 8px 14px 0 14px; }
.dropdown { position: absolute; z-index: 2; left: 14px; top: 66px; width: 174px; height: 263px; background: #fff; border: 1px solid #e4e4e4; box-shadow: 0 1px 3px rgba(0, 0, 0, .12); font-size: 14px; color: #5b5b5b; }
.search { display: flex; align-items: center; gap: 8px; height: 27px; padding: 1px 0 0 10px; border-bottom: 1px solid #b5b5b5; }
.search svg { fill: none; stroke: #444; stroke-width: 1.100; }
.dropdown ul { list-style: none; padding: 1px 0 0 10px; }
.dropdown li { display: flex; align-items: center; gap: 10px; height: 19px; letter-spacing: -.27px; }
.dropdown li i { width: 14px; height: 14px; margin-top: 2px; border: 1px solid #bdbdbd; }
.callout { position: absolute; z-index: 3; left: 2px; top: 5px; width: 203px; height: 335px; border: 3px solid #e60b0b; border-radius: 2px; }
.dates { display: flex; flex-direction: column; align-items: center; gap: 10px; padding-top: 16px; }
.dates span { width: 84px; height: 29px; border: 1px solid #e4e4e4; text-align: center; line-height: 27px; font-size: 14px; letter-spacing: -.1px; }
.dates span + span { height: 30px; line-height: 29px; }

.content { display: grid; grid-template-columns: 1164px 442px; column-gap: 7px; margin: 12px 0 0 1px; }
.map-card { height: 786px; padding: 0 7px; }
.legend { display: flex; height: 41px; padding-top: 11px; font-size: 16.500px; line-height: 25px; }
.lg { display: flex; align-items: flex-start; gap: 6px; letter-spacing: .2px; }
.lg-order { margin-left: 7px; line-height: 23px; }
.lg-move { margin-left: 23px; gap: 11px; }
.lg-move svg { margin-top: 4px; }
.lg-stop { margin-left: 30px; gap: 5px; }
.lg-object { margin-left: 27px; gap: 5px; line-height: 23px; }
.map { display: block; }

.land { fill: #efeeeb; }
.park { fill: #dfe8cb; }
.wood { fill: #d0e2aa; }
.tailings { fill: #d3dfd2; }
.water { fill: #aac6f1; }
.streams { fill: none; stroke: #aac6f1; stroke-width: 5; }
.dykes { fill: none; stroke: #e1eacf; stroke-width: 6; }
pattern path { stroke: #fbfcf7; stroke-width: .8; fill: none; opacity: .6; }
.lanes { fill: none; stroke: #f3f6e9; stroke-width: 3.500; stroke-linejoin: round; }
.bounds { fill: none; stroke: #99998f; stroke-width: 4; stroke-dasharray: 15 12; }
.road-case, .road-core, .rail-case, .rail-core, .rail-tick, .hw-case, .hw-core { fill: none; stroke-linejoin: round; }
.road-case { stroke: #bab9bb; stroke-width: 13; }
.road-core { stroke: #d9d8d9; stroke-width: 8; }
.rail-case { stroke: #d2cfd2; stroke-width: 13; opacity: .8; }
.rail-core { stroke: #aaa5aa; stroke-width: 4.500; }
.rail-tick { stroke: #aaa5aa; stroke-width: 13; stroke-dasharray: 3 88; }
.hw-case { stroke: #969596; stroke-width: 16; }
.hw-core { stroke: #cfcdcf; stroke-width: 9; }
.places, .street-names, .scale { font-family: "Open Sans", "Noto Sans", sans-serif; }
.places { font-size: 15.500px; fill: #505050; stroke: rgba(255, 255, 255, .7); stroke-width: 2; paint-order: stroke; }
.places .city { font-size: 21.500px; }
.places .isle { fill: #75735f; }
.street-names { font-size: 12px; fill: #8f838e; stroke: rgba(255, 255, 255, .8); stroke-width: 2; paint-order: stroke; }
.track { fill: none; stroke: #09b4a3; stroke-width: 3; stroke-dasharray: 5 5.500; }
.arrows { fill: #09b4a3; stroke: #09b4a3; stroke-width: 1; }
.stop-side { fill: #7b7b7b; stroke: #fff; stroke-width: 1; }
.pins { stroke: #fff; stroke-width: 1.500; }
.scale rect { fill: #4a97ea; stroke: #fff; stroke-width: 1; }
.scale text { font-size: 11px; fill: #222; }

.side { display: flex; flex-direction: column; }
.side h2 { font-size: 21px; line-height: 29px; text-align: center; }
.runs { height: 312px; padding: 2px 14px 0 8px; }
.runs-head { display: grid; grid-template-columns: 1fr 15px; height: 28px; }
.runs-head h2 { padding-left: 23px; letter-spacing: .4px; line-height: 30px; }
.help { margin: 2px 0 0 1px; fill: none; stroke: #8c8c8c; stroke-width: .9; }
.runs-row { display: grid; grid-template-columns: 312px 101px; width: 413px; height: 24px; font-size: 16px; line-height: 22px; border-bottom: 1px solid #e3e3e3; }
.runs-row > span:first-child { padding-left: 7px; border-right: 1px solid #6d9bea; letter-spacing: .45px; }
.runs-row > span:last-child { padding: 1px 6px 0 8px; text-align: right; }
.runs-row.runs-cols { height: 41px; padding-top: 5px; border-bottom: 2px solid #6d9bea; }
.runs-row.runs-cols > span:first-child { text-align: center; border: 0; padding: 1px 0 0 1px; }
.runs-row.runs-cols > span:last-child { position: relative; letter-spacing: .5px; white-space: nowrap; }
.sort-down, .sort-up { position: absolute; border: 5.500px solid transparent; }
.sort-down { left: 8px; top: 24px; border-top: 6px solid #222; border-bottom: 0; }
.picked { display: block; height: 20px; line-height: 20px; font-weight: 400; background: #c9dafc; border-left: 1px dotted #333; }
.runs-row.person { height: 23px; }
.runs-row.total { font-weight: 700; border-bottom: 0; line-height: 24px; }
.runs-row.total > span:first-child { letter-spacing: .2px; }
.runs-row.total > span:last-child { padding-top: 0; }

.moves { margin-top: 8px; height: 405px; padding: 2px 10px 0 8px; overflow: hidden; }
.moves h2 { height: 28px; padding-left: 4px; letter-spacing: .5px; }
.moves-row { display: grid; grid-template-columns: 212px 212px; border-bottom: 1px solid #e0e0e0; font-size: 16px; line-height: 20px; }
.moves-row > span { overflow: hidden; white-space: nowrap; }
.moves-row > span:first-child { border-right: 1px solid #6d9bea; padding-left: 49px; letter-spacing: .4px; }
.moves-row > span:last-child { padding-left: 7px; letter-spacing: .42px; }
.moves-cols { height: 40px; padding-top: 6px; border-bottom: 2px solid #6d9bea; line-height: 22px; }
.moves-row.moves-cols > span:first-child { position: relative; overflow: visible; border: 0; padding-left: 78px; }
.moves-row.moves-cols > span:last-child { padding-left: 73px; }
.sort-up { left: 7px; top: 22px; border-bottom: 6px solid #222; border-top: 0; }
.group { height: 26px; font-weight: 700; line-height: 23px; }
.moves-row.group > span:first-child { display: flex; padding-left: 7px; gap: 14px; letter-spacing: 0; }
.expander { width: 15px; height: 15px; margin-top: 6px; border: 1.500px solid #888; background: linear-gradient(#666, #666) center / 8px 1px no-repeat; }
.h24 { height: 24px; line-height: 23px; }
.h22 { height: 23px; line-height: 23px; }
.high { line-height: 21px; }
.low { line-height: 25px; }
.last { border-bottom: 0; }
.scrollbar { display: flex; align-items: center; justify-content: space-between; width: 417px; height: 11px; margin-top: 77px; padding: 0 13px; background: #f1f1f1; }
.scrollbar svg { fill: none; stroke: #444; stroke-width: 1.500; }
.thumb { width: 255px; height: 11px; background: #cbcbcb; margin: 0 93px 0 0; }
.tabs { display: grid; grid-template-columns: 220px 221px; gap: 1px; height: 52px; margin-top: 9px; background: #ccc; }
.tabs span { background: #fff; color: #5c5c5c; text-align: center; font-size: 24px; line-height: 53px; height: 52px; }
.tabs .active { background: #808080; color: #fff; -webkit-text-stroke: .3px #fff; }
```
